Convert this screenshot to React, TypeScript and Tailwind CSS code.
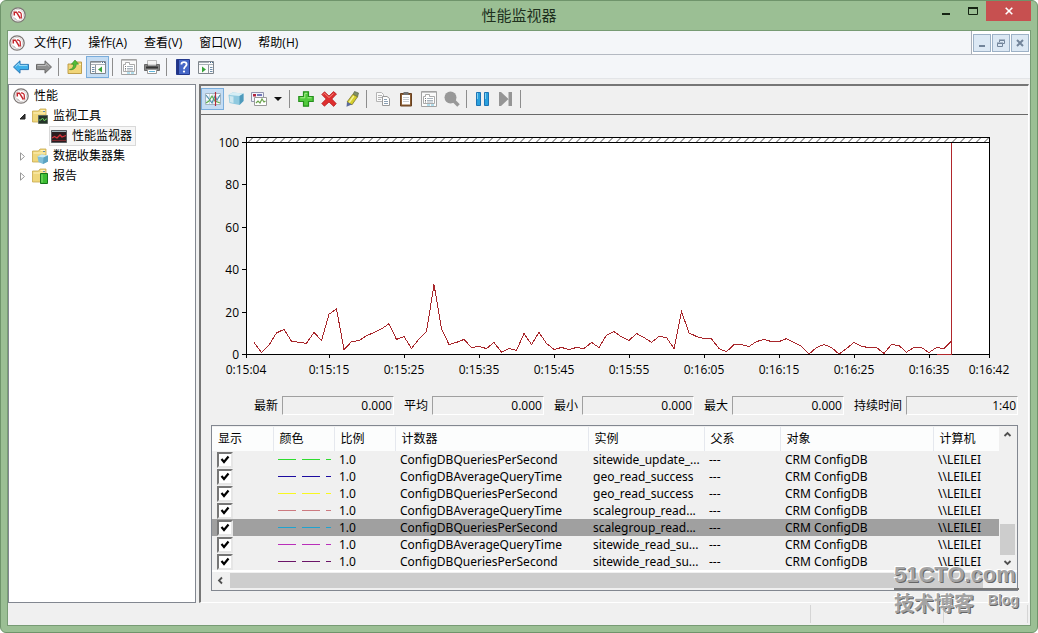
import type { ReactNode } from 'react'

const HISTORY = [
  5.7, 1, 4.4, 10.2, 11.8, 6.3, 5.7, 5.3, 10.4, 6.6, 19, 21.5, 2.4, 6, 6.6, 8.8, 10.4, 12.1, 14.5, 7.1,
  8.5, 2.8, 7.4, 10.8, 33, 12.1, 4.7, 5.7, 7.1, 3.3, 3.8, 2.8, 5.7, 1.1, 2.8, 1.9, 9.9, 4.7, 10.4, 5.2,
  2.4, 3.3, 2.4, 3.3, 2.8, 5.7, 3.3, 9.1, 10.8, 8.3, 6.6, 9.9, 8, 5.8, 8.5, 8, 2.8, 20.3, 10.2, 8.5,
  7.5, 7.4, 2.8, 1.3, 4.7, 4.7, 3.8, 6.1, 7.1, 6.1, 6.1, 7.5, 5.7, 3.8, 0.2, 3.3, 4.7, 3.3, 0.2, 2.8,
  5.7, 3.8, 3.3, 3.3, 0.5, 4.7, 4.2, 1.1, 3.3, 3.3, 0.9, 3.3, 2.8, 6.3,
]

const TIME_TICKS = [
  { x: 45, label: '0:15:04' }, { x: 128, label: '0:15:15' }, { x: 203, label: '0:15:25' },
  { x: 278, label: '0:15:35' }, { x: 353, label: '0:15:45' }, { x: 428, label: '0:15:55' },
  { x: 503, label: '0:16:05' }, { x: 578, label: '0:16:15' }, { x: 653, label: '0:16:25' },
  { x: 728, label: '0:16:35' }, { x: 788, label: '0:16:42' },
]

const STATS = [
  { id: 'last', label: '最新', value: '0.000' },
  { id: 'avg',  label: '平均', value: '0.000' },
  { id: 'min',  label: '最小', value: '0.000' },
  { id: 'max',  label: '最大', value: '0.000' },
  { id: 'span', label: '持续时间', value: '1:40' },
]

const COLUMNS = ['显示', '颜色', '比例', '计数器', '实例', '父系', '对象', '计算机']

const COUNTERS = [
  { color: '#2fdc2f', counter: 'ConfigDBQueriesPerSecond', instance: 'sitewide_update_...' },
  { color: '#1c0ca0', counter: 'ConfigDBAverageQueryTime', instance: 'geo_read_success' },
  { color: '#f8f820', counter: 'ConfigDBQueriesPerSecond', instance: 'geo_read_success' },
  { color: '#cc7a80', counter: 'ConfigDBAverageQueryTime', instance: 'scalegroup_read...' },
  { color: '#1fa3d0', counter: 'ConfigDBQueriesPerSecond', instance: 'scalegroup_read...', selected: true },
  { color: '#b92fb9', counter: 'ConfigDBAverageQueryTime', instance: 'sitewide_read_su...' },
  { color: '#6b1468', counter: 'ConfigDBQueriesPerSecond', instance: 'sitewide_read_su...' },
]

/* ---------- icons ---------- */

function Icon({ children }: { children: ReactNode }) {
  return (
    <svg viewBox="0 0 16 16" className="size-4 shrink-0" fill="none" aria-hidden="true">
      {children}
    </svg>
  )
}

const PerfIcon = () => (
  <Icon>
    <circle cx="8" cy="8" r="7.2" fill="#fff" stroke="#7d7674" strokeWidth="1.3" />
    <circle cx="8" cy="8" r="5.6" stroke="#cfcaca" strokeWidth=".8" />
    <path d="M4.3 8.500V5.200h2.200L10 10.800" stroke="#c4242b" strokeWidth="1.500" />
    <path d="M8 4.800c2.200 0 3.300 1.200 3.300 3v3.200H9" stroke="#c4242b" strokeWidth="1.200" />
    <path d="M4 10.500c.5 1 1.500 1.700 2.500 2" stroke="#9a9494" strokeWidth=".8" />
  </Icon>
)

const BackIcon = () => (
  <Icon>
    <path d="M.5 8 7 1.800v3.600h8.500v5.200H7v3.600z" fill="#3fb0ea" stroke="#2b77b5" />
    <path d="M2.500 7.600 6 4.400v2h8.300" stroke="#a4def8" />
  </Icon>
)

const ForwardIcon = () => (
  <Icon>
    <path d="M15.500 8 9 1.800v3.600H.5v5.200H9v3.600z" fill="#8f8f8f" stroke="#696969" />
    <path d="M1.500 6.500H10v-2l3.300 3" stroke="#bdbdbd" />
  </Icon>
)

const FolderShape = () => (
  <>
    <path d="M.5 3h6l1.500-2h6v13H.5z" fill="#efd77c" stroke="#c8a84b" strokeWidth=".8" />
    <path d="M1.500 5h12M8.500 2.500h4.500" stroke="#fff3bd" />
    <path d="M11 3.500h2" stroke="#5c8bb0" />
  </>
)

const UpFolderIcon = () => (
  <Icon>
    <path d="M1 5h7l1-2h5.500v11.500H1z" fill="#f0d579" stroke="#b99640" strokeWidth=".9" />
    <path d="M9 5.500h5" stroke="#fff1b8" />
    <path d="M2.500 10.500C5.500 10 6.600 8 6.600 5.200H4.400L8 1l3.600 4.200H9.200c0 4-3 6.200-6.700 5.300z" fill="#53bd37" stroke="#2f8724" strokeWidth=".6" />
  </Icon>
)

const PaneIcon = ({ right = false }: { right?: boolean }) => (
  <Icon>
    <path d="M.5 2.500h15v12H.5z" fill="#fbfbfb" stroke="#7f868d" />
    <path d="M1 3.500h10M1 5.500h14" stroke="#a9b0b7" />
    <path d="M12 3.500h1M14 3.500h1" stroke="#446b91" />
    {right ? (
      <>
        <path d="M10.500 6v8" stroke="#8d959c" />
        <path d="M12 8.500h2.500M12 10.500h2.500M12 12.500h2.500" stroke="#6e8dab" />
        <path d="M4 7.500l4 3-4 3z" fill="#38a33a" />
      </>
    ) : (
      <>
        <path d="M5.500 6v8" stroke="#8d959c" />
        <path d="M2 8.500h2.500M2 10.500h2.500M2 12.500h2.500" stroke="#6e8dab" />
        <path d="M12 7.500l-4 3 4 3z" fill="#38a33a" />
      </>
    )}
  </Icon>
)

const PropsIcon = () => (
  <Icon>
    <path d="M.5.5h15v15H.5z" fill="#fafafa" stroke="#a2a2a2" />
    <path d="M1 1.500h14" stroke="#c4c4c4" />
    <path d="M2.500 5.500v7h11v-7h-5v-2h-4v2z" fill="#fff" stroke="#a0a0a0" strokeWidth=".9" />
    <path d="M4 7.500h1M4 9.500h1M4 11h1" stroke="#777" />
    <path d="M6 7.500h6M6 9.500h6M6 11h6" stroke="#a9b4bd" />
    <path d="M6 14h3M10 14h3" stroke="#6cc0dd" />
  </Icon>
)

const PrintIcon = () => (
  <Icon>
    <path d="M3.500 1.500h9V6h-9z" fill="#f4f4f4" stroke="#aaa" strokeWidth=".8" />
    <path d="M.5 5.500h3v1.500h9V5.500h3v6H.5z" fill="#858585" stroke="#6a6a6a" />
    <path d="M2 8.500h12" stroke="#333" strokeWidth="2" />
    <path d="M3.500 10.500h9v4h-9z" fill="#fff" stroke="#999" />
    <path d="M5 12.500h6" stroke="#60b6dc" />
  </Icon>
)

const HelpIcon = () => (
  <Icon>
    <path d="M1.500.5h13v15h-13z" fill="#4466c6" stroke="#24398d" />
    <path d="M3 1v14" stroke="#213486" strokeWidth="2" />
    <path d="M6.400 5.400c0-3 5.200-3 5.200 0 0 2-2.600 2-2.600 4.800" stroke="#fff" strokeWidth="1.800" />
    <circle cx="9" cy="12.600" r="1.100" fill="#fff" />
  </Icon>
)

const GraphIcon = () => (
  <Icon>
    <path d="M.5 2.500h15v11H.5z" fill="#f7fbff" stroke="#a3b4c1" />
    <path d="M1 6h14M1 10h14M4.500 3v10M8 3v10" stroke="#c9d7e0" />
    <path d="M1 4l3 4 3 4 3-7 2 4 3-5" stroke="#4a8fae" strokeWidth="1.100" />
    <path d="M1 12l3-2 3-5 3 5 5 2" stroke="#5cae4a" strokeWidth="1.100" />
    <path d="M10.500 1v14" stroke="#b52b38" strokeWidth="1.200" />
  </Icon>
)

const CubeIcon = () => (
  <Icon>
    <path d="M.5 4l4-2.500 11 1V10l-4 4-10-2z" fill="#8fc9df" />
    <path d="M.5 4l4-2.500 11 1-4 2.500z" fill="#d6eef5" />
    <path d="M11.500 5l4-2.500V10l-4 4z" fill="#4f9abb" />
    <path d="M1.500 5l4 .6v6.400l-3.500-.8z" fill="#cfe8f0" />
  </Icon>
)

const PictureIcon = () => (
  <Icon>
    <path d="M.5 1.500h12v9H.5z" fill="#f2f3fb" stroke="#9194ae" />
    <path d="M2 3h3v2.500H2z" fill="#b3253f" />
    <path d="M6 3h5v2H6z" fill="#7277b8" />
    <path d="M3.500 6.500h12v8h-12z" fill="#fff" stroke="#9a9a9a" />
    <path d="M5 12l2-2 2 2 2-4 2 3 1.500-1" stroke="#6aa34c" strokeWidth="1.200" />
  </Icon>
)

const PlusIcon = () => (
  <Icon>
    <path d="M5.500.8h5v4.700h4.700v5h-4.700v4.700h-5v-4.700H.8v-5h4.700z" fill="#52cb3d" stroke="#258f1c" strokeWidth="1.200" />
    <path d="M6.800 2.300h2.400M2.300 6.800H6.800V2.500M9.500 6.800h4" stroke="#a9ef8f" />
  </Icon>
)

const CrossIcon = () => (
  <Icon>
    <path d="M.8 3.500 3.500.8 8 5 12.500.6 15.500 3 10.800 8l4.400 4.600-2.500 2.800L8 11l-4.600 4.200L.8 12.500 5.200 8z" fill="#df2f2f" stroke="#b51d21" strokeWidth=".8" />
    <path d="M2.300 3.500l1.200-1.200L8 6.500l4.500-4" stroke="#f48d82" />
  </Icon>
)

const PenIcon = () => (
  <Icon>
    <path d="M10.500.5l4 1.500-1 4-4.500-2.500z" fill="#7f8f68" stroke="#59664a" strokeWidth=".7" />
    <path d="M8.800 3.300l4.700 2.500-5.500 8-5-2.800z" fill="#d6cf2c" stroke="#7a742b" strokeWidth=".8" />
    <path d="M9.800 5l-4.600 6.500" stroke="#f6f29a" strokeWidth="1.300" />
    <path d="M3 11l4.800 2.600L2.500 15.800z" fill="#5b6a9c" />
  </Icon>
)

const CopyIcon = () => (
  <Icon>
    <path d="M1.500 1.500h5l2 2v7h-7z" fill="#fafafa" stroke="#b4b4b4" />
    <path d="M3 4.500h4M3 6.500h4M3 8.500h3" stroke="#b5b5b5" />
    <path d="M7.500 5.500h4.500l2.500 2v7h-7z" fill="#fff" stroke="#999" />
    <path d="M9 8.500h3M9 10.500h4M9 12.500h4" stroke="#8ba0b4" />
  </Icon>
)

const PasteIcon = () => (
  <Icon>
    <path d="M2.500 2.500h11v12.500h-11z" fill="#8a5c31" stroke="#684121" />
    <path d="M4 4h8v9.500H4z" fill="#fff" />
    <path d="M5.500 1h5v3h-5z" fill="#727272" />
    <path d="M5 6.500h6M5 8.500h6M5 10.500h6" stroke="#c6cbd0" />
  </Icon>
)

const SearchIcon = () => (
  <Icon>
    <circle cx="6.500" cy="6.500" r="6" fill="#989898" />
    <path d="M10 10l4.500 4.500" stroke="#989898" strokeWidth="3.500" />
  </Icon>
)

const PauseIcon = () => (
  <Icon>
    <path d="M1.500 1.500h4v13h-4zM9.500 1.500h4v13h-4z" fill="#2aa0dd" stroke="#1d74b5" />
    <path d="M2.500 2v6M10.500 2v6" stroke="#7fd0f2" />
  </Icon>
)

const StepIcon = () => (
  <Icon>
    <path d="M1 1h2l7.500 7L3 15H1zM10.500 1h3.500v14h-3.500z" fill="#959595" />
  </Icon>
)

const ToolsFolderIcon = () => (
  <Icon>
    <FolderShape />
    <path d="M6.500 7.500h9v8h-9z" fill="#253429" stroke="#5d695f" />
    <path d="M7 12h2l1.500-2 2 3 1.200-2H15" stroke="#68cc5b" />
  </Icon>
)

const DataFolderIcon = () => (
  <Icon>
    <FolderShape />
    <path d="M5.500 8.500l4-2 6.500 1v6l-5 2.500-4.500-2z" fill="#81bfd8" />
    <path d="M5.500 8.500l4-2 6.500 1-4.500 2z" fill="#caeaf3" />
    <path d="M11.500 9.500l4.500-2v6l-5 2.500z" fill="#5ba3c2" />
  </Icon>
)

const ReportFolderIcon = () => (
  <Icon>
    <FolderShape />
    <path d="M8.500 5.500h7v10h-7z" fill="#3bbb31" stroke="#16751a" />
    <path d="M10 6.500v8" stroke="#8de67b" />
  </Icon>
)

const MonitorIcon = () => (
  <Icon>
    <path d="M.5 2.500h15v12H.5z" fill="#2b1d20" stroke="#575c61" />
    <path d="M1 3.500h14" stroke="#9eb2b8" />
    <path d="M1 10l2.500-1.500L6 10l3-3 2 2 4-1.500" stroke="#d8333c" strokeWidth="1.300" />
    <path d="M1 12.500h14" stroke="#7b2a30" />
  </Icon>
)

/* ---------- toolbar parts ---------- */

function ToolButton({ label, active = false, children }: { label: string; active?: boolean; children: ReactNode }) {
  return (
    <button
      type="button"
      aria-label={label}
      className={`flex h-[22px] w-[23px] items-center justify-center border ${
        active ? 'border-[#7aaddc] bg-[#c4dcf3]' : 'border-transparent'
      }`}
    >
      {children}
    </button>
  )
}

const Separator = () => <span className="mr-1 ml-[3px] h-[18px] w-px bg-[#8d8d8d]" />

function Toolbar() {
  return (
    <div className="flex h-6 items-center border-b border-[#e3e5e8] bg-[#f4f6f9] pt-px pl-px">
      <ToolButton label="后退"><BackIcon /></ToolButton>
      <ToolButton label="前进"><ForwardIcon /></ToolButton>
      <Separator />
      <ToolButton label="上一级"><UpFolderIcon /></ToolButton>
      <ToolButton label="显示控制台树" active><PaneIcon /></ToolButton>
      <Separator />
      <ToolButton label="属性"><PropsIcon /></ToolButton>
      <ToolButton label="打印"><PrintIcon /></ToolButton>
      <Separator />
      <ToolButton label="帮助"><HelpIcon /></ToolButton>
      <ToolButton label="显示操作窗格"><PaneIcon right /></ToolButton>
    </div>
  )
}

function MonitorToolbar() {
  return (
    <div className="flex h-[29px] items-center border-b border-[#696969] pb-0.5">
      <ToolButton label="查看当前活动" active><GraphIcon /></ToolButton>
      <ToolButton label="查看日志数据"><CubeIcon /></ToolButton>
      <ToolButton label="图形类型"><PictureIcon /></ToolButton>
      <button type="button" aria-label="更多图形类型" className="flex h-[22px] w-4 items-center justify-center">
        <svg viewBox="0 0 8 4" className="h-1 w-2"><path d="M0 0h8L4 4z" fill="#111" /></svg>
      </button>
      <Separator />
      <ToolButton label="添加"><PlusIcon /></ToolButton>
      <ToolButton label="删除"><CrossIcon /></ToolButton>
      <ToolButton label="突出显示"><PenIcon /></ToolButton>
      <Separator />
      <ToolButton label="复制属性"><CopyIcon /></ToolButton>
      <ToolButton label="粘贴计数器列表"><PasteIcon /></ToolButton>
      <ToolButton label="属性"><PropsIcon /></ToolButton>
      <ToolButton label="缩放"><SearchIcon /></ToolButton>
      <Separator />
      <ToolButton label="冻结显示"><PauseIcon /></ToolButton>
      <ToolButton label="更新数据"><StepIcon /></ToolButton>
      <Separator />
    </div>
  )
}

/* ---------- window chrome ---------- */

function TitleBar() {
  return (
    <header className="grid h-[29px] grid-cols-[1fr_auto_1fr] items-start">
      <span className="pt-1.5 pl-[3px]"><PerfIcon /></span>
      <h1 className="pt-0.5 text-[15px] leading-6 text-[#20301e]">性能监视器</h1>
      <div className="flex justify-end">
        <button type="button" aria-label="最小化" className="flex h-5 w-[27px] items-center justify-center">
          <svg viewBox="0 0 10 10" className="size-2.5"><path d="M1 8h8" stroke="#152413" strokeWidth="2" /></svg>
        </button>
        <button type="button" aria-label="最大化" className="flex h-5 w-[27px] items-center justify-center">
          <svg viewBox="0 0 10 8" className="h-2 w-2.5" fill="none">
            <path d="M.5 1v6.500h9V1" stroke="#152413" /><path d="M0 1h10" stroke="#152413" strokeWidth="2" />
          </svg>
        </button>
        <button type="button" aria-label="关闭" className="flex h-5 w-[45px] items-center justify-center bg-[#c75050]">
          <svg viewBox="0 0 8 8" className="size-2"><path d="M.7.7l6.600 6.600M7.300.7L.7 7.300" stroke="#fff" strokeWidth="1.600" /></svg>
        </button>
      </div>
    </header>
  )
}

function MdiButton({ label, children }: { label: string; children: ReactNode }) {
  return (
    <button type="button" aria-label={label}
      className="flex size-[18px] items-center justify-center border border-[#9db1c6] bg-[#dce8f4]">
      <svg viewBox="0 0 10 10" className="size-2.5" fill="none" stroke="#72849a">{children}</svg>
    </button>
  )
}

function MenuBar() {
  return (
    <nav className="flex h-6 items-center border-b border-[#b4b9c2] bg-[#f4f6f9] pl-px">
      <PerfIcon />
      <div className="flex flex-1 gap-[17px] pl-[9px]">
        {['文件(F)', '操作(A)', '查看(V)', '窗口(W)', '帮助(H)'].map(m => (
          <button key={m} type="button" className="leading-5 whitespace-nowrap">{m}</button>
        ))}
      </div>
      <div className="flex h-full items-center gap-px border-l border-[#a9afb9] bg-white px-px">
        <MdiButton label="最小化子窗口"><path d="M2 8h6" strokeWidth="2" /></MdiButton>
        <MdiButton label="还原子窗口">
          <path d="M1.500 5.500h5v3h-5zM1 5h6M3.500 4V2.500h5v3H7M3 2h6" />
        </MdiButton>
        <MdiButton label="关闭子窗口"><path d="M2 2l6 6M8 2L2 8" strokeWidth="2" /></MdiButton>
      </div>
    </nav>
  )
}

function Tree() {
  return (
    <aside className="w-[188px] shrink-0 border border-[#828790] bg-white pt-px">
      <ul className="leading-5">
        <li>
          <div className="flex h-5 items-center gap-[5px] pl-1"><PerfIcon />性能</div>
          <ul>
            <li>
              <div className="flex h-5 items-center gap-[5px] pl-[9px]">
                <Expander open /><ToolsFolderIcon />监视工具
              </div>
              <ul className="pl-10">
                <li className="flex h-5 w-fit items-center gap-[5px] border border-[#d9d9d9] bg-[#f6f6f6] px-px pr-[3px]">
                  <MonitorIcon />性能监视器
                </li>
              </ul>
            </li>
            <li className="flex h-5 items-center gap-[5px] pl-[9px]"><Expander /><DataFolderIcon />数据收集器集</li>
            <li className="flex h-5 items-center gap-[5px] pl-[9px]"><Expander /><ReportFolderIcon />报告</li>
          </ul>
        </li>
      </ul>
    </aside>
  )
}

function Expander({ open = false }: { open?: boolean }) {
  return (
    <svg viewBox="0 0 9 9" className="size-[9px] shrink-0" aria-hidden="true">
      {open
        ? <path d="M7 2v5H2z" fill="#333" stroke="#222" />
        : <path d="M2.500.8v7.400L6.500 4.500z" fill="#fff" stroke="#9a9a9a" />}
    </svg>
  )
}

/* ---------- monitor ---------- */

function Chart() {
  const y = (v: number) => 239 - v * 2.12
  const line = HISTORY.map((v, i) => `${53 + i * 7.5},${y(v) + 0.5}`).join(' ')

  return (
    <svg viewBox="0 0 827 270" className="w-full text-xs" role="img" aria-label="性能监视器">
      <defs>
        <pattern id="hatch" x="46" y="23" width="8" height="4" patternUnits="userSpaceOnUse">
          <path d="M1 4.500l5-5" stroke="#333" strokeWidth=".9" />
        </pattern>
      </defs>
      <rect x="45.5" y="22.5" width="743" height="217" fill="#fff" stroke="#000" />
      <rect x="46" y="23" width="742" height="4" fill="url(#hatch)" />
      <path d="M45 27.500h744" stroke="#000" />
      {[0, 20, 40, 60, 80, 100].map(v => (
        <g key={v}>
          <path d={`M41 ${Math.round(y(v)) + 0.5}h5`} stroke="#000" />
          <text x="38" y={Math.round(y(v)) + 5} textAnchor="end">{v}</text>
        </g>
      ))}
      {TIME_TICKS.map(t => (
        <g key={t.label}>
          <path d={`M${t.x + 0.5} 240v3`} stroke="#000" />
          <text x={t.x} y="259" textAnchor="middle">{t.label}</text>
        </g>
      ))}
      <polyline points={line} fill="none" stroke="#a8262b" strokeWidth="1" shapeRendering="crispEdges" />
      <path d="M750.500 28v212" stroke="#b0262b" />
      <path d="M736 239.500h15" stroke="#b0262b" />
    </svg>
  )
}

function StatsRow() {
  return (
    <div className="mt-[11px] flex items-center justify-end gap-2.5 pr-2.5">
      {STATS.map(s => (
        <div key={s.id} className="flex items-center gap-1">
          <label htmlFor={s.id} className="whitespace-nowrap">{s.label}</label>
          <input id={s.id} readOnly value={s.value}
            className="h-[19px] w-28 border border-t-[#a0a0a0] border-r-white border-b-white border-l-[#a0a0a0] bg-transparent pr-px text-right outline-none" />
        </div>
      ))}
    </div>
  )
}

function CounterTable() {
  return (
    <div className="mx-2.5 mt-2.5 border border-[#828790] pt-px">
      <div className="flex">
        <table className="flex-1 table-fixed border-collapse text-left">
          <colgroup>
            <col className="w-[61px]" /><col className="w-[61px]" /><col className="w-[61px]" />
            <col className="w-[193px]" /><col className="w-[116px]" /><col className="w-[76px]" />
            <col className="w-[153px]" /><col />
          </colgroup>
          <thead>
            <tr className="h-6 bg-[#fcfdfd]">
              {COLUMNS.map(c => (
                <th key={c} scope="col" className="border-r border-[#e5e8ee] p-0 pl-1.5 font-normal last:border-r-0">{c}</th>
              ))}
            </tr>
          </thead>
          <tbody className="font-['Noto_Sans','Noto_Sans_CJK_SC',sans-serif]">
            {COUNTERS.map((c, i) => (
              <tr key={i} className={`h-[17px] leading-[17px] whitespace-nowrap ${c.selected ? 'bg-[#a0a0a0]' : ''}`}>
                <td className="p-0 pl-[5px]">
                  <span className="relative flex">
                    <input type="checkbox" defaultChecked aria-label={`显示 ${c.counter} ${c.instance}`}
                      className="peer h-4 w-4 appearance-none border-2 border-t-[#767676] border-r-[#e6e6e6] border-b-[#e6e6e6] border-l-[#767676] bg-white" />
                    <svg viewBox="0 0 16 16" className="pointer-events-none absolute size-4 opacity-0 peer-checked:opacity-100" fill="none">
                      <path d="M4.500 7l2.500 3 4.500-5.500" stroke="#000" strokeWidth="2.200" />
                    </svg>
                  </span>
                </td>
                <td className="p-0 pl-[5px]">
                  <svg viewBox="0 0 53 3" className="h-[3px] w-[53px]">
                    <path d="M0 1.500h53" stroke={c.color} strokeDasharray="18 6" />
                  </svg>
                </td>
                <td className="p-0 pl-[5px]">1.0</td>
                <td className="p-0 pl-[5px]">{c.counter}</td>
                <td className="p-0 pl-[5px]">{c.instance}</td>
                <td className="p-0 pl-[5px]">---</td>
                <td className="p-0 pl-[5px]">CRM ConfigDB</td>
                <td className="p-0 pl-[5px]">\\LEILEI</td>
              </tr>
            ))}
          </tbody>
        </table>
        <div className="flex w-[18px] flex-col items-start pl-px">
          <ScrollArrow label="向上滚动" d="M1.500 6l3-3 3 3" />
          <span className="flex-1" />
          <span className="h-[31px] w-[15px] bg-[#cdcdcd]" />
          <ScrollArrow label="向下滚动" d="M1.500 3l3 3 3-3" />
        </div>
      </div>
      <div className="flex h-5 items-center border-t-2 border-white pb-px pl-px">
        <ScrollArrow label="向左滚动" d="M6 1.500l-3 3 3 3" />
        <span className="ml-0.5 h-[15px] flex-1 bg-[#cdcdcd]" />
        <span className="w-[34px]" />
      </div>
    </div>
  )
}

function ScrollArrow({ label, d }: { label: string; d: string }) {
  return (
    <button type="button" aria-label={label} className="flex size-[15px] shrink-0 items-center justify-center">
      <svg viewBox="0 0 9 9" className="size-[9px]" fill="none" stroke="#505050" strokeWidth="1.800"><path d={d} /></svg>
    </button>
  )
}

function Watermark() {
  return (
    <div className="pointer-events-none absolute right-[18px] bottom-3.5 w-[125px] font-bold text-[#a3a3a3] [text-shadow:-1px_-1px_0_#fff,1px_1px_0_#666]">
      <p className="border-b-2 border-[#777] font-['Liberation_Sans',sans-serif] text-[22px] leading-[26px]">51CTO.com</p>
      <div className="flex items-start justify-between">
        <span className="text-xl leading-7">技术博客</span>
        <span className="font-['Liberation_Sans',sans-serif] text-sm leading-5">Blog</span>
      </div>
    </div>
  )
}

export default function App() {
  return (
    <div lang="zh-CN"
      className="relative flex min-h-screen flex-col rounded-md border border-[#6f946b] bg-[#9bbf94] px-1.5 pb-1.5 font-['Open_Sans','Noto_Sans_CJK_SC',sans-serif] text-xs text-black">
      <TitleBar />
      <div className="flex flex-1 flex-col border border-[#779b74] bg-[#f0f0f0]">
        <MenuBar />
        <Toolbar />
        <main className="mt-[5px] flex flex-1 gap-[3px]">
          <Tree />
          <section className="mr-px min-w-0 flex-1 border-t-2 border-r border-b border-l-2 border-t-[#767676] border-r-white border-b-white border-l-[#767676] pb-[9px]">
            <MonitorToolbar />
            <Chart />
            <StatsRow />
            <CounterTable />
          </section>
        </main>
        <footer className="flex h-[22px] justify-end py-0.5 pr-0.5">
          <span className="w-[133px] border-l border-[#d5d5d5]" />
          <span className="w-[85px] border-x border-[#d5d5d5]" />
        </footer>
      </div>
      <Watermark />
    </div>
  )
}
